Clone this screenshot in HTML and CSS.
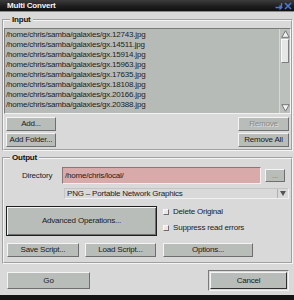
FILE: index.html
```html
<!DOCTYPE html>
<html>
<head>
<meta charset="utf-8">
<link rel="stylesheet" href="styles.css">
</head>
<body>
<div class="window">
  <div class="titlebar">
    <span class="title">Multi Convert</span>
    <span class="tb-icons">
      <svg class="ic-shade" width="8" height="8" viewBox="0 0 8 8"><path d="M0.5 5.5H6.5M4.5 3.5L6.8 5.5L4.5 7.5M6.5 5.5V1" fill="none" stroke="#4a78d8" stroke-width="1.3"/></svg>
      <svg class="ic-close" width="8" height="8" viewBox="0 0 8 8"><path d="M1 1L7 7M7 1L1 7" fill="none" stroke="#4a78d8" stroke-width="1.6"/></svg>
    </span>
  </div>
  <div class="content">
    <fieldset class="group group-input">
      <legend>Input</legend>
      <div class="listbox">
        <ul class="files">
          <li>/home/chris/samba/galaxies/gx.12743.jpg</li>
          <li>/home/chris/samba/galaxies/gx.14511.jpg</li>
          <li>/home/chris/samba/galaxies/gx.15914.jpg</li>
          <li>/home/chris/samba/galaxies/gx.15963.jpg</li>
          <li>/home/chris/samba/galaxies/gx.17635.jpg</li>
          <li>/home/chris/samba/galaxies/gx.18108.jpg</li>
          <li>/home/chris/samba/galaxies/gx.20166.jpg</li>
          <li>/home/chris/samba/galaxies/gx.20388.jpg</li>
        </ul>
        <div class="scrollbar">
          <svg class="sb-arrow" width="9" height="8" viewBox="0 0 9 8"><path d="M4.5 0.8L8.2 7.3H0.8Z" fill="#f2f2f2" stroke="#6a6a6a" stroke-width="0.9"/></svg>
          <div class="sb-track"><div class="sb-thumb"></div></div>
          <svg class="sb-arrow" width="9" height="8" viewBox="0 0 9 8"><path d="M4.5 7.2L8.2 0.7H0.8Z" fill="#f2f2f2" stroke="#6a6a6a" stroke-width="0.9"/></svg>
        </div>
      </div>
      <div class="btnrow">
        <div class="btncol">
          <button class="btn btn-add">Add...</button>
          <button class="btn btn-add">Add Folder...</button>
        </div>
        <div class="btncol">
          <button class="btn btn-remove disabled">Remove</button>
          <button class="btn btn-remove">Remove All</button>
        </div>
      </div>
    </fieldset>

    <fieldset class="group group-output">
      <legend>Output</legend>
      <div class="dir-row">
        <span class="dir-label">Directory</span>
        <div class="dir-input">/home/chris/local/</div>
        <button class="btn btn-dots">...</button>
      </div>
      <div class="combo">
        <span class="combo-text">PNG – Portable Network Graphics</span>
        <span class="combo-arrow"><svg width="6" height="5" viewBox="0 0 6 5"><path d="M0 0H6L3 5Z" fill="#555"/></svg></span>
      </div>
      <div class="adv-row">
        <button class="btn btn-adv">Advanced Operations...</button>
        <div class="checks">
          <label class="check"><span class="box"></span>Delete Original</label>
          <label class="check"><span class="box"></span>Suppress read errors</label>
        </div>
      </div>
      <div class="script-row">
        <button class="btn btn-save">Save Script...</button>
        <button class="btn btn-load">Load Script...</button>
        <button class="btn btn-opts">Options...</button>
      </div>
    </fieldset>

    <div class="footer">
      <button class="btn btn-go">Go</button>
      <div class="default-frame"><button class="btn btn-cancel">Cancel</button></div>
    </div>
  </div>
</div>
</body>
</html>
```

FILE: styles.css
```css
html, body {
  margin: 0;
  padding: 0;
}
body {
  width: 294px;
  height: 300px;
  background: #141414;
  overflow: hidden;
  font-family: "Liberation Sans", Arial, sans-serif;
  font-size: 8px;
  letter-spacing: -0.2px;
  color: #1a1a1a;
}
.window {
  width: 294px;
  height: 295px;
  background: #d9d9d9;
  display: flex;
  flex-direction: column;
}
.titlebar {
  height: 12px;
  background: linear-gradient(#3c3c3c, #1c1c1c 60%, #101010);
  border-bottom: 1px solid #8a8a8a;
  box-sizing: border-box;
  display: flex;
  align-items: center;
  justify-content: space-between;
  padding: 0 2px 0 7px;
}
.title {
  color: #f4f4f4;
  font-weight: bold;
  line-height: 10px;
}
.tb-icons {
  display: flex;
  gap: 1px;
  align-items: center;
}
.content {
  display: flex;
  flex-direction: column;
}
.group {
  margin: 0 1px 0 2px;
  padding: 0;
  border: 2px groove #f4f4f4;
  min-width: 0;
}
.group legend {
  font-weight: bold;
  line-height: 10px;
  padding: 0 2px;
  margin-left: 6px;
  color: #111;
}
.group-input {
  margin-top: 3px;
  padding: 3px 0 2px 0;
}
.listbox {
  height: 86px;
  box-sizing: border-box;
  background: #b7bbb7;
  border-top: 1px solid #7a7a7a;
  border-left: 1px solid #7a7a7a;
  border-bottom: 1px solid #f2f2f2;
  border-right: 1px solid #f2f2f2;
  display: flex;
}
.files {
  list-style: none;
  margin: 0;
  padding: 1px 0 0 1px;
  flex: 1;
}
.files li {
  height: 10px;
  line-height: 10px;
  color: #222;
  white-space: nowrap;
}
.scrollbar {
  width: 10px;
  display: flex;
  flex-direction: column;
  align-items: center;
  padding: 1px 0;
  background: #bcc0bc;
  border-left: 1px solid #d8d8d8;
}
.sb-arrow {
  display: block;
  flex: none;
}
.sb-track {
  flex: 1;
  width: 8px;
  padding-top: 1px;
}
.sb-thumb {
  height: 24px;
  box-sizing: border-box;
  background: #e6e6e6;
  border: 1px solid #7e7e7e;
  border-top-color: #fafafa;
  border-left-color: #fafafa;
}
.btn {
  font-family: inherit;
  font-size: 8px;
  letter-spacing: -0.2px;
  color: #1a1a1a;
  background: #b9bdb9;
  border: 1px solid;
  border-color: #f4f4f4 #6e6e6e #6e6e6e #f4f4f4;
  padding: 0;
  margin: 0;
  box-sizing: border-box;
  line-height: 10px;
}
.btn.disabled {
  color: #8a8a8a;
  text-shadow: 1px 1px 0 #dedede;
}
.btnrow {
  display: flex;
  justify-content: space-between;
  padding: 3px 2px 0 2px;
}
.btncol {
  display: flex;
  flex-direction: column;
  gap: 2px;
}
.btn-add {
  width: 50px;
  height: 14px;
}
.btn-remove {
  width: 51px;
  height: 14px;
}
.group-output {
  margin-top: 2px;
  padding: 4px 0 5px 0;
}
.dir-row {
  display: flex;
  align-items: center;
  height: 17px;
}
.dir-label {
  width: 40px;
  margin-left: 18px;
  color: #222;
}
.dir-input {
  width: 199px;
  height: 17px;
  box-sizing: border-box;
  background: #d8aaaa;
  border: 1px solid;
  border-color: #8a7676 #f6eeee #f6eeee #8a7676;
  line-height: 15px;
  padding-left: 2px;
  color: #222;
}
.btn-dots {
  width: 20px;
  height: 13px;
  margin-left: 4px;
  color: #777;
}
.combo {
  margin: 4px 2px 0 60px;
  height: 11px;
  box-sizing: border-box;
  border: 1px solid;
  border-color: #c4c4c4 #f0f0f0 #f0f0f0 #c4c4c4;
  display: flex;
  align-items: center;
}
.combo-text {
  flex: 1;
  padding-left: 2px;
  line-height: 9px;
  color: #222;
}
.combo-arrow {
  width: 10px;
  height: 9px;
  border-left: 1px solid #b0b0b0;
  display: flex;
  align-items: center;
  justify-content: center;
}
.adv-row {
  display: flex;
  margin-top: 7px;
  padding-left: 2px;
}
.btn-adv {
  width: 151px;
  height: 30px;
  border: 1px solid #202020;
  box-shadow: inset 1px 1px 0 #f4f4f4, inset -1px -1px 0 #6e6e6e;
}
.checks {
  display: flex;
  flex-direction: column;
  gap: 6px;
  margin-left: 6px;
  padding-top: 1px;
}
.check {
  display: flex;
  align-items: center;
  gap: 4px;
  line-height: 10px;
  color: #222;
}
.box {
  width: 6px;
  height: 6px;
  box-sizing: border-box;
  background: #e8e8e8;
  border: 1px solid;
  border-color: #f8f8f8 #6e6e6e #6e6e6e #f8f8f8;
}
.script-row {
  display: flex;
  margin-top: 7px;
  padding-left: 3px;
  gap: 6px;
}
.btn-save { width: 72px; height: 14px; }
.btn-load { width: 71px; height: 14px; }
.btn-opts { width: 90px; height: 14px; margin-left: 1px; }
.footer {
  display: flex;
  justify-content: space-between;
  align-items: center;
  padding: 6px 5px 0 7px;
}
.btn-go {
  width: 83px;
  height: 17px;
}
.default-frame {
  width: 81px;
  height: 21px;
  box-sizing: border-box;
  border: 1px solid;
  border-color: #7a7a7a #f4f4f4 #f4f4f4 #7a7a7a;
  padding: 1px;
  display: flex;
}
.btn-cancel {
  flex: 1;
  border-color: #f4f4f4 #303030 #303030 #f4f4f4;
}
```
